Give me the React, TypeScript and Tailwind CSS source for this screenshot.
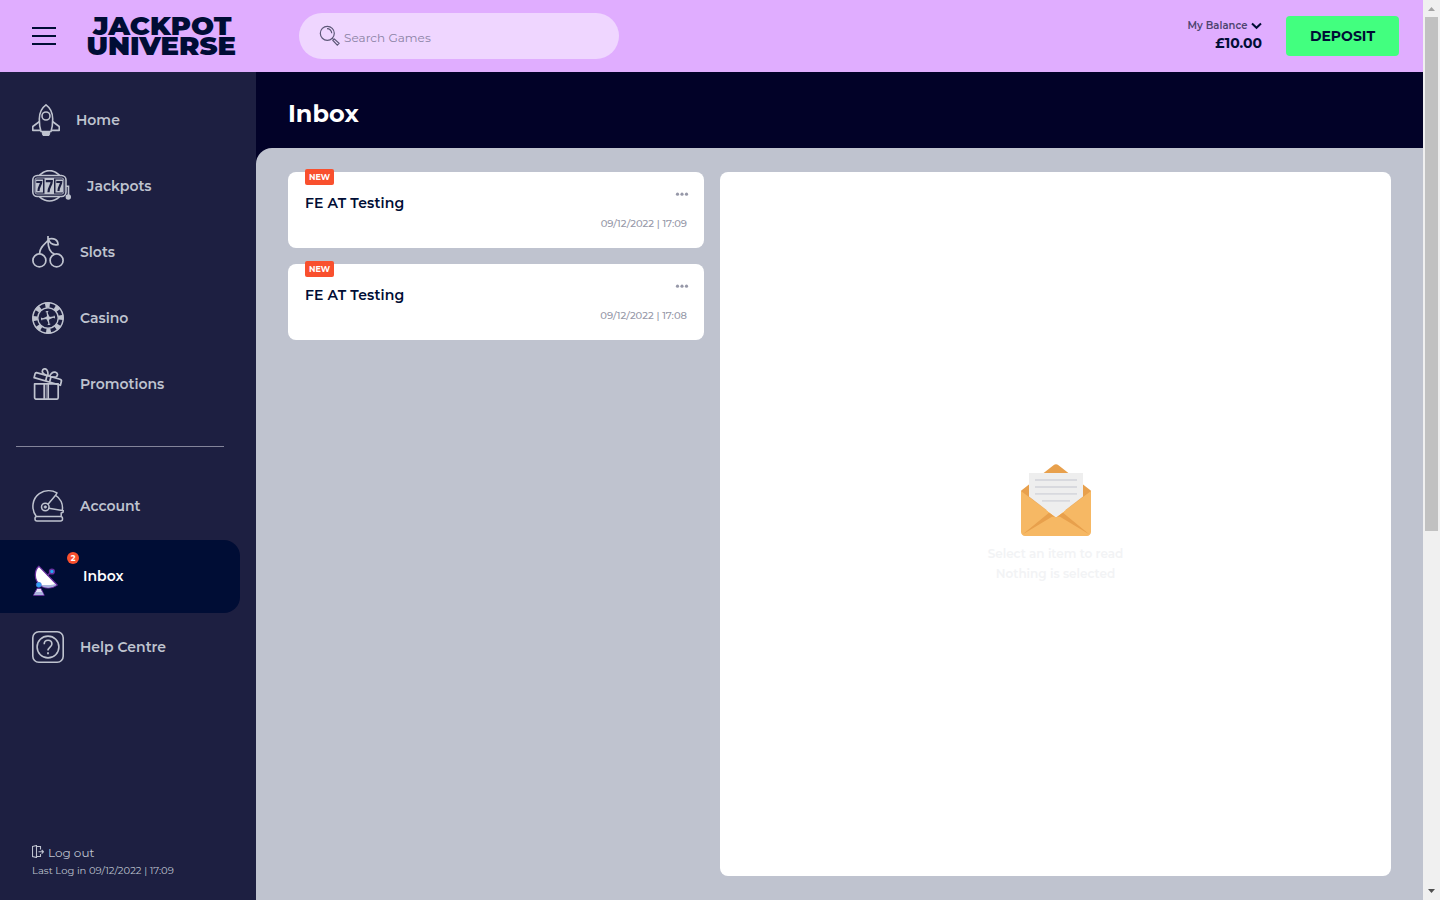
import type { ReactNode } from "react";

function RocketIcon() {
  return (
    <svg className="block shrink-0" width="28" height="32" viewBox="0 0 28 32" fill="none" stroke="#bfc3cf" strokeWidth="1.600" strokeLinejoin="round">
      <path d="M14 .8C9.500 4 7.300 9 7.300 15c0 5 .5 9 1.700 12.500h10c1.200-3.500 1.700-7.500 1.700-12.500C20.700 9 18.500 4 14 .8z" />
      <circle cx="14" cy="12" r="4" />
      <path d="M7.500 17.500.8 22.500v3.900h7.700M20.500 17.500l6.700 5v3.900h-7.700" />
      <path d="M10 28.500h8l-1 3h-6z" fill="#bfc3cf" strokeWidth="1" />
    </svg>
  );
}

function SlotMachineIcon() {
  return (
    <svg className="block shrink-0" width="39" height="32" viewBox="0 0 39 32" fill="none" stroke="#bfc3cf" strokeWidth="1.600">
      <path d="M7.500 5.200C14-.8 21-.8 27.500 5.200M7.500 26.800c6.500 5.400 13.500 5.400 20 0" />
      <rect x=".8" y="5.500" width="33.200" height="21" rx="4.500" />
      <rect x="3" y="8" width="28.800" height="16" rx="2" strokeWidth=".8" />
      <rect x="3.500" y="9.500" width="7.500" height="13" fill="#bfc3cf" stroke="none" />
      <rect x="12.500" y="8" width="9.500" height="16" fill="#bfc3cf" stroke="none" />
      <rect x="23.500" y="9.500" width="7.500" height="13" fill="#bfc3cf" stroke="none" />
      <g stroke="#1d1f41" strokeWidth="2.200">
        <path d="M4.300 12h4.900c0 3-2.700 4.500-2.700 9M13.800 11.200h6c0 4-3.300 5.500-3.300 11M24.300 12h4.900c0 3-2.700 4.500-2.700 9" />
      </g>
      <path d="M34 16.300h2.500V26" />
      <circle cx="36.300" cy="27" r="2.700" fill="#bfc3cf" stroke="none" />
    </svg>
  );
}

function CherryIcon() {
  return (
    <svg className="block shrink-0" width="32" height="32" viewBox="0 0 32 32" fill="none" stroke="#bfc3cf" strokeWidth="1.700">
      <circle cx="7.400" cy="24.400" r="6.500" />
      <circle cx="24.600" cy="24.400" r="6.500" />
      <path d="M16 0v4.500C12 8.500 7.500 12 7.500 18M16 4.500c0 6 1.500 12 6.500 13.500M16.300 3c6-1.500 9.700 1 9.700 5.600-5 .8-8-.4-9.700-5.600z" />
    </svg>
  );
}

function ChipIcon() {
  return (
    <svg className="block shrink-0" width="32" height="32" viewBox="0 0 32 32" fill="none" stroke="#bfc3cf">
      <circle cx="16" cy="16" r="15.200" strokeWidth="1.500" />
      <circle cx="16" cy="16" r="12.900" strokeWidth="5.400" pathLength="80" strokeDasharray="4.600 5.400" strokeDashoffset="-7.200" />
      <circle cx="16" cy="16" r="10.200" strokeWidth="1.300" />
      <path d="M15 9.500l2 13M9.500 17l13-2" strokeWidth="1.300" />
      <path d="M16 12.500l1.200 2.300 2.300 1.200-2.300 1.200L16 19.500l-1.200-2.300-2.300-1.200 2.300-1.200z" fill="#bfc3cf" strokeWidth=".5" />
      <path d="M13.700 9.800l2.600-.4M15.700 22.600l2.600-.4M9.400 15.700l.4 2.600M22.200 13.700l.4 2.600" />
    </svg>
  );
}

function GiftIcon() {
  return (
    <svg className="block shrink-0" width="32" height="32" viewBox="0 0 32 32" fill="none" stroke="#bfc3cf" strokeWidth="1.700" strokeLinejoin="round">
      <path d="M2.600 15.800h23.600V29.500c0 1-.7 1.700-1.700 1.700H4.300c-1 0-1.700-.7-1.700-1.700z" />
      <path d="M12.200 16v15M16.200 16v15" />
      <path d="M14.200 16v15" strokeWidth=".7" />
      <path d="M4.500 4.600 28 11.300c1.200.4 1.700 1 1.400 2l-1 4L2.100 9.600l1-3.800c.2-.8.700-1.300 1.400-1.200z" />
      <path d="M15 7.500l-1.300 5.300M19 8.700l-1.400 5.300" />
      <path d="M15.500 7.800c-2-1-5.500-1.800-5.200-4.600.3-2.400 3.200-3.200 4.600-1.300 1 1.300 1.200 4 .9 6M17.500 8.300c1-2.200 3-4.700 5.700-4.200 2.700.5 3 3.400 1 4.600-1.300.7-3.500.5-5.500.2" />
    </svg>
  );
}

function HelmetIcon() {
  return (
    <svg className="block shrink-0" width="32" height="32" viewBox="0 0 32 32" fill="none" stroke="#bfc3cf" strokeWidth="1.500" strokeLinejoin="round">
      <path d="M4.200 26.300C-1.200 19 .2 8.500 7.300 3.600 12.500.1 19.500-.1 25 2.800l-1.400 2.500C28.500 8 31.300 14 30.300 20.400l1 .3-.3 1.700-1.800.6v3.300" />
      <path d="M23.600 5.300 15.800 14.400M16.800 18.300l13.500 2.100" />
      <circle cx="13.300" cy="17" r="3.800" />
      <circle cx="13.300" cy="17" r="1.300" fill="#bfc3cf" strokeWidth=".6" />
      <rect x="3" y="26.400" width="27.500" height="4.700" rx="2" />
    </svg>
  );
}

function DishIcon() {
  return (
    <svg className="block shrink-0" width="26" height="32" viewBox="0 0 26 32" fill="none" strokeLinejoin="round">
      <path d="M1.500 30.300 5 23.500h4l3.200 6.800z" fill="#dfe3f5" stroke="#6b2fa0" strokeWidth="1" />
      <path d="M2 30l1.600-3h6.600l1.500 3z" fill="#a9b3dc" />
      <path d="M6.800 1.200C1.800 6 2.500 14.500 7 19c5 4.800 12.500 5.200 18.200 1z" fill="#fff" stroke="#6b2fa0" strokeWidth="1.200" />
      <path d="M8.500 20.300c3-1 10.500.8 14.500-1.300l1.200 1c-5 3.600-11.500 3.500-15.700.3z" fill="#a9b3dc" />
      <path d="M15.500 10.500l4-4" stroke="#6b2fa0" strokeWidth="1.600" />
      <circle cx="19.900" cy="6.500" r="2.400" fill="#25a8f0" stroke="#6b2fa0" strokeWidth="1.400" />
      <circle cx="6.800" cy="19.800" r="2.500" fill="#2fa6f5" stroke="#536edb" strokeWidth=".8" />
    </svg>
  );
}

function HelpIcon() {
  return (
    <svg className="block shrink-0" width="32" height="32" viewBox="0 0 32 32" fill="none" stroke="#bfc3cf" strokeWidth="1.600">
      <rect x=".8" y=".8" width="30.400" height="30.400" rx="6" />
      <circle cx="16" cy="16" r="10.900" />
      <path d="M12.200 13.300c0-2.400 1.600-4 3.800-4s3.900 1.500 3.900 3.700c0 3-3.900 3.200-3.900 6.600" />
      <path d="M16 21.300v2" strokeWidth="1.800" />
    </svg>
  );
}

function NavRow({ icon, label }: { icon: ReactNode; label: string }) {
  return (
    <div className="flex h-[66px] items-center gap-4 pl-8">
      {icon}
      <span className="text-[14px] font-semibold leading-[18px] text-[#bfc3cf]">{label}</span>
    </div>
  );
}

function MessageCard({ time }: { time: string }) {
  return (
    <div className="relative flex h-[76px] flex-col rounded-lg bg-white px-[17px]">
      <span className="absolute -top-[3px] left-[17px] flex h-4 w-[29px] items-center justify-center rounded-[2px] bg-[#f9502e] text-[8px] font-bold text-white">
        NEW
      </span>
      <div className="flex justify-end pt-[20px]">
        <svg className="-mr-[2px] block" width="14" height="4" viewBox="0 0 14 4" fill="#9698a8">
          <circle cx="2.500" cy="2.200" r="1.600" />
          <circle cx="7" cy="2.200" r="1.600" />
          <circle cx="11.500" cy="2.200" r="1.600" />
        </svg>
      </div>
      <div className="-mt-[2px] text-[14px] font-semibold leading-[18px] tracking-[0.15px] text-[#000d35]">FE AT Testing</div>
      <div className="mt-[5px] text-right text-[10px] font-medium leading-[13px] text-[#9698a8]">{time}</div>
    </div>
  );
}

function Envelope() {
  return (
    <svg className="block" width="70" height="72" viewBox="0 0 70 73" preserveAspectRatio="none">
      <path d="M0 27 32.500 1.300c1.600-1.300 3.400-1.300 5 0L70 27v20H0z" fill="#e8a04c" />
      <path d="M0 27.500 35 54l35-26.500V69c0 2.200-1.800 4-4 4H4c-2.200 0-4-1.800-4-4z" fill="#f6b864" />
      <path d="M1.500 71.500 28 49.500l7 4.700 7-4.700 26.500 22L39 53.500h-8z" fill="#e8a04c" />
      <path d="M8 9h54v24L35 54 8 33z" fill="#eee" />
      <path d="M14 16.200h42M14 23.300h42M14 30.300h42M21 37.400h28" stroke="#d8d9de" strokeWidth="2" />
    </svg>
  );
}

export default function App() {
  return (
    <div className="flex h-[900px] w-[1440px] overflow-hidden font-['Montserrat','Inter',sans-serif]">
      <div className="flex w-[1423px] flex-col">
        <header className="flex h-[72px] shrink-0 items-center bg-[#e0adff]">
          <div className="ml-8 flex h-[18px] w-6 flex-col justify-between">
            <i className="block h-0.5 bg-[#000d35]" />
            <i className="block h-0.5 bg-[#000d35]" />
            <i className="block h-0.5 bg-[#000d35]" />
          </div>
          <svg className="ml-8 block shrink-0 overflow-visible" width="148" height="42" viewBox="0 0 148 42" fill="#000d35" fontFamily="Montserrat, Inter, sans-serif" fontWeight="900" fontSize="25.500">
            <text x="5" y="19.800" textLength="138.500" lengthAdjust="spacingAndGlyphs">JACKPOT</text>
            <text x="-1.500" y="40.300" textLength="149.500" lengthAdjust="spacingAndGlyphs">UNIVERSE</text>
          </svg>
          <div className="ml-[63px] flex h-[46px] w-[320px] items-center rounded-full bg-[#efd6ff] pl-5">
            <svg className="-mt-px block" width="22" height="22" viewBox="0 0 22 22" fill="none" stroke="#5d5878" strokeWidth="1.200">
              <circle cx="8.300" cy="8.300" r="7" />
              <path d="M8 3.700c2.700 0 4.700 2 4.700 4.600" />
              <path d="M13.200 13.200l2 2" />
              <path d="M13.900 15.500l1.500-1.500 4.700 4.300-1.800 1.800z" />
            </svg>
            <span className="ml-[3px] mt-[3px] text-[12px] leading-4 tracking-[0.04px] text-[#8b83a5]">Search Games</span>
          </div>
          <div className="ml-auto mr-6 flex flex-col items-end">
            <div className="flex items-center text-[10px] font-semibold leading-[14px] tracking-[0.05px] text-[#4d4470]">
              My Balance
              <svg className="ml-[3.500px] mt-px block" width="11" height="8" viewBox="0 0 11 8" fill="none" stroke="#000d35" strokeWidth="2">
                <path d="M1 1.500l4.500 4.300L10 1.500" />
              </svg>
            </div>
            <div className="mb-px text-[14px] font-bold leading-5 text-[#000d35]">£10.00</div>
          </div>
          <button className="mr-6 h-10 w-[113px] rounded-[4px] bg-[#42ff7f] text-[14px] font-bold text-[#000d35]">DEPOSIT</button>
        </header>
        <div className="flex min-h-0 flex-1">
          <aside className="flex w-64 shrink-0 flex-col bg-[#1d1f41]">
            <nav className="mt-[15px]">
              <NavRow icon={<RocketIcon />} label="Home" />
              <NavRow icon={<SlotMachineIcon />} label="Jackpots" />
              <NavRow icon={<CherryIcon />} label="Slots" />
              <NavRow icon={<ChipIcon />} label="Casino" />
              <NavRow icon={<GiftIcon />} label="Promotions" />
            </nav>
            <hr className="ml-4 mt-[29px] w-[208px] border-t border-[#83849a]" />
            <div className="mt-[26px]">
              <NavRow icon={<HelmetIcon />} label="Account" />
              <div className="relative mt-px flex h-[73px] w-60 items-center rounded-r-2xl bg-[#000d35] pl-8">
                <div className="mt-[9px]"><DishIcon /></div>
                <span className="absolute left-[67px] top-3 flex size-3 items-center justify-center rounded-full bg-[#f9502e] text-[8px] font-bold leading-none text-white">2</span>
                <span className="-mt-px ml-[25px] text-[14px] font-semibold leading-[18px] text-white">Inbox</span>
              </div>
              <div className="mt-px">
                <NavRow icon={<HelpIcon />} label="Help Centre" />
              </div>
            </div>
            <div className="mb-[23px] ml-8 mt-auto text-[#bfc3cf]">
              <div className="flex items-center text-[12px] leading-4">
                <svg className="-mt-[4px] mr-1 block" width="12" height="13" viewBox="0 0 12 13" fill="none" stroke="#bfc3cf" strokeWidth="1.100">
                  <path d="M4.500 1.500h4V4.500M8.500 9v2.500h-4M.5 1.500l4-1v12l-4-1zM6.500 6.800h5M9.700 5l1.800 1.800-1.800 1.800" />
                </svg>
                Log out
              </div>
              <div className="mt-[3px] text-[10px] leading-[13px]">Last Log in 09/12/2022 | 17:09</div>
            </div>
          </aside>
          <div className="flex min-w-0 flex-1 flex-col bg-[#020228]">
            <h1 className="flex h-[76px] shrink-0 items-center pl-8 pt-[7px] text-[24px] font-bold leading-8 text-white">Inbox</h1>
            <main className="flex flex-1 gap-4 rounded-tl-2xl bg-[#bfc3cf] px-8 py-6">
              <div className="flex w-[416px] shrink-0 flex-col gap-4">
                <MessageCard time="09/12/2022 | 17:09" />
                <MessageCard time="09/12/2022 | 17:08" />
              </div>
              <section className="flex flex-1 flex-col items-center rounded-lg bg-white pt-[292px]">
                <Envelope />
                <p className="mt-2 text-center text-[12px] font-semibold leading-5 text-[#f2f3f5]">
                  Select an item to read
                  <br />
                  Nothing is selected
                </p>
              </section>
            </main>
          </div>
        </div>
      </div>
      <div className="flex w-[17px] flex-col items-center justify-between bg-[#f0f0f0]">
        <div className="flex flex-col items-center">
          <svg className="block" width="17" height="17" viewBox="0 0 17 17"><path d="M5 11l3.500-4 3.500 4z" fill="#a3a3a3" /></svg>
          <div className="h-[514px] w-[13px] bg-[#c1c1c1]" />
        </div>
        <svg className="block" width="17" height="17" viewBox="0 0 17 17"><path d="M5 6l3.500 4L12 6z" fill="#505050" /></svg>
      </div>
    </div>
  );
}
